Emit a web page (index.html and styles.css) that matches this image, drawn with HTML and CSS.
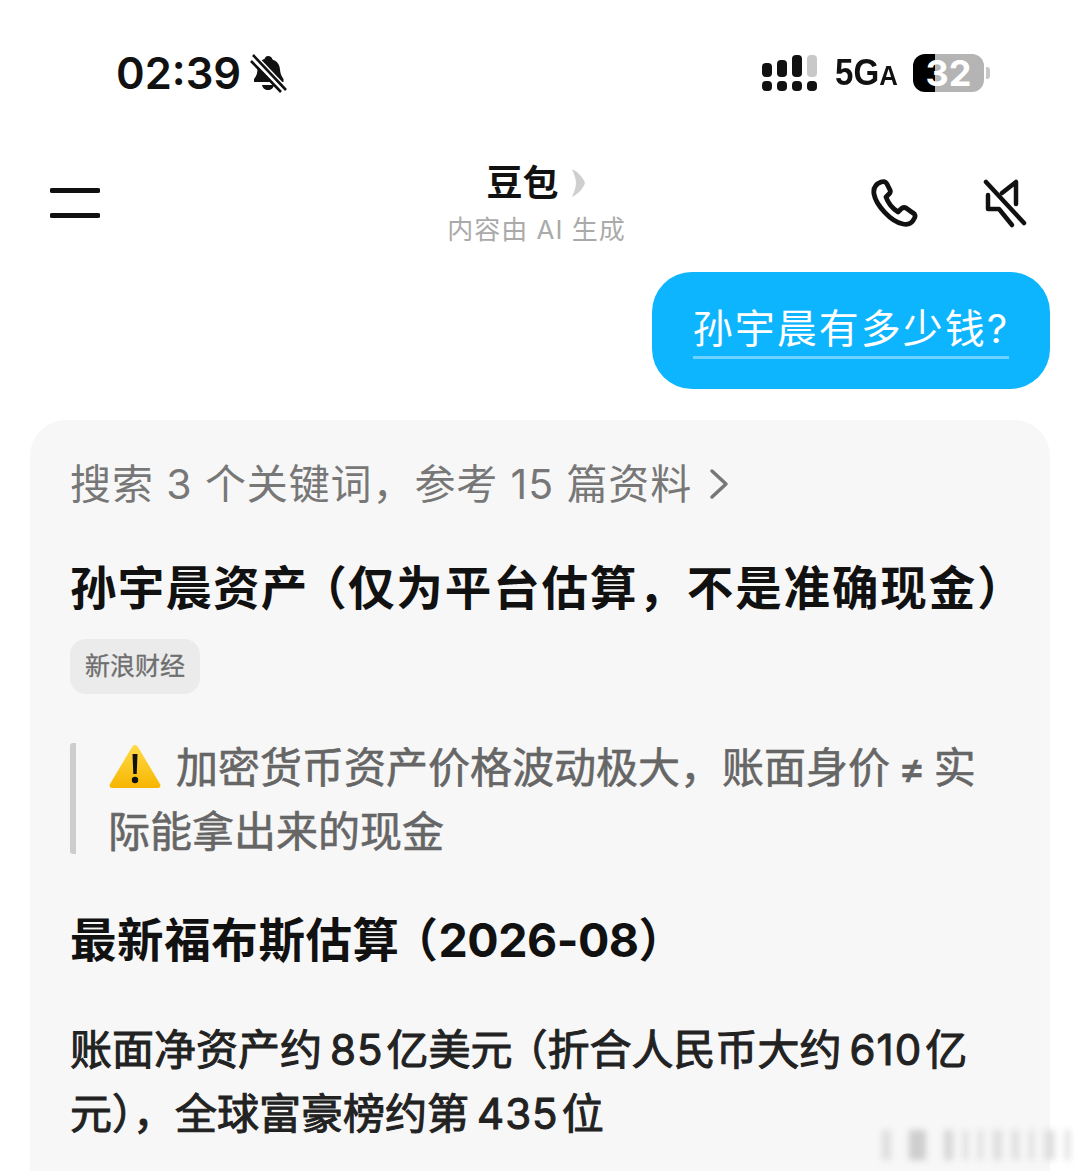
FILE: index.html
```html
<!DOCTYPE html>
<html lang="zh-CN">
<head>
  <meta charset="UTF-8">
  <meta name="viewport" content="width=device-width, initial-scale=1.0">
  <title>豆包</title>
  <link rel="stylesheet" href="styles.css">
</head>
<body>
  <div class="status-bar">
    <div class="status-left">
      <span class="time">02:39</span>
      <svg class="bell" width="38" height="40" viewBox="0 0 38 40">
        <path d="M18 3c2.400 0 4 1.500 4.500 3.500 4.500 1.500 7 5 7.500 10 .3 3.500 1 6 3.500 9.500v3H4v-3c2.500-3 3.500-6 3.500-10 0-5.500 3-9 7-10C15 4.500 16 3 18 3z" fill="#111"/>
        <path d="M12 32h12c-.5 3-3 5-6 5s-5.500-2-6-5z" fill="#111"/>
        <path d="M1 1l36 38" stroke="#fff" stroke-width="7"/>
        <path d="M3 2l33 35M1 8l30 31" stroke="#111" stroke-width="2.600" fill="none"/>
      </svg>
    </div>
    <div class="status-right">
      <div class="signal">
        <span class="bar b1"></span><span class="bar b2"></span><span class="bar b3"></span><span class="bar b4"></span>
        <span class="dot"></span><span class="dot"></span><span class="dot"></span><span class="dot"></span>
      </div>
      <span class="net">5G<small>A</small></span>
      <div class="battery">
        <div class="battery-body"><span>32</span></div>
        <span class="battery-cap"></span>
      </div>
    </div>
  </div>

  <header class="chat-header">
    <svg class="menu-icon" width="50" height="32" viewBox="0 0 50 32">
      <path d="M2 3.500h46M2 28.500h46" stroke="#111" stroke-width="5" stroke-linecap="round"/>
    </svg>
    <div class="chat-title">
      <div class="chat-name">
        <span>豆包</span>
        <svg width="16" height="30" viewBox="0 0 16 30">
          <path d="M1 1c6 3 11 8 13 14-2 6-7 11-13 14 2-5 4-10 4-14S3 6 1 1z" fill="#cfcfcf"/>
        </svg>
      </div>
      <div class="chat-note">内容由 AI 生成</div>
    </div>
    <div class="chat-actions">
      <svg width="50" height="50" viewBox="0 0 50 50" fill="none" stroke="#111" stroke-width="4.800" stroke-linejoin="round" stroke-linecap="round">
        <path d="M10 3c3-1 5 0 6 2l3 6c1 2 0 3-1 4l-3 3c2 6 6 11 12 15l3-3c1-1 3-2 5-1l7 5c2 1 3 3 1 6-2 4-6 6-11 5C20 43 5 26 3 15 2 9 5 5 10 3z"/>
      </svg>
      <svg width="46" height="50" viewBox="0 0 46 50" fill="none" stroke="#111" stroke-width="4.500" stroke-linejoin="round" stroke-linecap="round">
        <path d="M3 3l38 41"/>
        <path d="M19 14L33 3v22"/>
        <path d="M5 16v14h11l13 16"/>
      </svg>
    </div>
  </header>

  <main class="chat">
    <div class="bubble-row">
      <div class="bubble"><span>孙宇晨有多少钱?</span></div>
    </div>

    <section class="answer">
      <div class="search-line">
        <span>搜索 3 个关键词，参考 15 篇资料</span>
        <svg width="22" height="34" viewBox="0 0 22 34" fill="none" stroke="#777" stroke-width="3.500" stroke-linecap="round" stroke-linejoin="round">
          <path d="M4 4l14 13L4 30"/>
        </svg>
      </div>
      <h2 class="answer-title">孙宇晨资产<span class="paren">（</span><span class="title-rest">仅为平台估算，不是准确现金）</span></h2>
      <span class="source-tag">新浪财经</span>
      <blockquote class="warning">
        <div class="warning-text">
          <svg class="warning-icon" width="54" height="46" viewBox="0 0 54 46">
            <defs>
              <linearGradient id="warnFill" x1="0" y1="0" x2="0" y2="1">
                <stop offset="0" stop-color="#ffdc4a"/>
                <stop offset="1" stop-color="#f7b500"/>
              </linearGradient>
            </defs>
            <path d="M27 2c1 0 2 .5 3 2l22 37c1 2 0 4-2 4H4c-2 0-3-2-2-4L24 4c1-1.500 2-2 3-2z" fill="url(#warnFill)"/>
            <path d="M24.500 11h5l-.8 20h-3.400z" fill="#111"/>
            <circle cx="27" cy="37" r="3.200" fill="#111"/>
          </svg>加密货币资产价格波动极大，账面身价<span class="not-equal">≠</span>实<br>际能拿出来的现金
        </div>
      </blockquote>
      <h2 class="answer-heading">最新福布斯估算<span class="paren">（</span><span class="heading-num">2026-08）</span></h2>
      <p class="answer-text">账面净资产约<span class="num">85</span>亿美元<span class="paren paren-small">（</span>折合人民币大约<span class="num">610</span>亿<br>元），全球富豪榜约第<span class="num">435</span>位</p>
    </section>
  </main>

  <div class="watermark">
    <span class="w1"></span><span class="w2"></span><span class="w3"></span><span class="w4"></span><span class="w4"></span><span class="w1"></span><span class="w5"></span><span class="w4"></span><span class="w6"></span><span class="w4"></span>
  </div>
</body>
</html>
```

FILE: styles.css
```css
body {
  margin: 0;
  width: 1080px;
  height: 1171px;
  overflow: hidden;
  position: relative;
  background: #fff;
  color: #111;
  font-family: Inter, "Noto Sans CJK SC", sans-serif;
}

.status-bar {
  display: flex;
  justify-content: space-between;
  align-items: center;
  height: 146px;
  padding: 0 90px 0 116px;
  box-sizing: border-box;
}

.status-left {
  display: flex;
  align-items: center;
  gap: 9px;
}

.time {
  font-size: 43.500px;
  font-weight: 600;
}

.status-right {
  display: flex;
  align-items: center;
}

.signal {
  display: grid;
  grid-template-columns: repeat(4, 10px);
  column-gap: 5px;
  row-gap: 4px;
  align-items: end;
  width: 55px;
  margin-right: 18px;
}

.bar {
  background: #111;
  border-radius: 4px;
  width: 10px;
}

.b1 { height: 14px; }
.b2 { height: 17px; }
.b3 { height: 22px; }
.b4 { height: 22px; background: #c8c8c8; }

.dot {
  height: 10px;
  background: #111;
  border-radius: 4px;
}

.net {
  font-family: "Liberation Sans", sans-serif;
  font-size: 36px;
  font-weight: 700;
  width: 78px;
  transform: scaleX(0.92);
  transform-origin: left;
}

.net small {
  font-size: 28px;
}

.battery {
  display: flex;
  align-items: center;
  gap: 2px;
}

.battery-body {
  width: 71px;
  height: 38px;
  border-radius: 12px;
  background: linear-gradient(to right, #000 0 22px, #b4b4b4 22px);
  display: flex;
  justify-content: center;
  align-items: center;
  color: #fff;
  font-size: 36px;
  font-weight: 700;
}

.battery-cap {
  width: 4px;
  height: 12px;
  background: #c8c8c8;
  border-radius: 0 3px 3px 0;
}

.chat-header {
  display: grid;
  grid-template-columns: 1fr auto 1fr;
  align-items: center;
  height: 126px;
  padding: 0 51px 0 50px;
}

.menu-icon {
  margin-top: -12px;
}

.chat-title {
  text-align: center;
  margin: -12px 6px 0 0;
}

.chat-name {
  display: flex;
  justify-content: center;
  align-items: center;
  gap: 12px;
  font-size: 36px;
  font-weight: 700;
  line-height: 50px;
}

.chat-note {
  font-size: 26px;
  letter-spacing: 1px;
  line-height: 36px;
  color: #aaa;
  margin-top: 4px;
}

.chat-actions {
  display: flex;
  justify-content: flex-end;
  align-items: center;
  gap: 62px;
  margin-top: -10px;
}

.chat {
  padding: 0 30px;
}

.bubble-row {
  display: flex;
  justify-content: flex-end;
}

.bubble {
  width: 398px;
  height: 117px;
  box-sizing: border-box;
  padding-top: 30px;
  background: #0db5ff;
  border-radius: 40px;
  color: #fff;
  font-size: 40px;
  line-height: 54px;
  text-align: center;
}

.bubble span {
  display: inline-block;
  border-bottom: 3px solid #6dd2ff;
  letter-spacing: 2px;
}

.answer {
  margin-top: 31px;
  height: 800px;
  padding: 38px 40px 0;
  box-sizing: border-box;
  background: #f7f7f7;
  border-radius: 36px 36px 0 0;
}

.search-line {
  display: flex;
  align-items: center;
  gap: 16px;
  color: #777;
  font-size: 41px;
  letter-spacing: 0.900px;
  line-height: 52px;
}

.answer-title,
.answer-heading {
  margin: 0;
  font-size: 46.500px;
  font-weight: 700;
  line-height: 64px;
  white-space: nowrap;
}

.answer-title {
  margin-top: 46px;
  letter-spacing: 1.200px;
}

.title-rest {
  letter-spacing: 1.900px;
}

/* half-width opening bracket, the gap goes in front of it */
.paren {
  font-feature-settings: "halt";
  margin-left: 15px;
}

.source-tag {
  display: inline-block;
  margin-top: 19px;
  padding: 0 15px;
  background: #ebebeb;
  border-radius: 16px;
  color: #6f6f6f;
  font-size: 25px;
  line-height: 55px;
  -webkit-text-stroke: 0.3px #6f6f6f;
}

.warning {
  margin: 49px 0 0;
  padding-left: 32px;
  border-left: 6px solid #cdcdcd;
  border-radius: 3px;
  color: #666;
  font-size: 42px;
  line-height: 64px;
  height: 111px;
  -webkit-text-stroke: 0.6px #666;
}

.warning-text {
  transform: translateY(-7px);
}

.warning-icon {
  vertical-align: -6px;
  margin-right: 14px;
}

.not-equal {
  margin: 0 8px;
}

.answer-heading {
  margin-top: 54px;
  letter-spacing: 0.600px;
}

.heading-num {
  letter-spacing: -0.500px;
}

.answer-text {
  margin: 46px 0 0;
  font-size: 42px;
  line-height: 64px;
  color: #222;
  white-space: nowrap;
  -webkit-text-stroke: 1px #222;
}

.num {
  margin: 0 3px 0 8px;
  letter-spacing: 1px;
}

.paren-small {
  margin-left: 14px;
}

.watermark {
  position: absolute;
  right: 10px;
  bottom: 11px;
  display: flex;
  gap: 10px;
  height: 30px;
  filter: blur(3px);
}

.watermark span {
  background: #dedede;
}

.watermark .w1 { width: 9px; }
.watermark .w2 { width: 17px; background: #cecece; margin: 0 8px; }
.watermark .w3 { width: 9px; background: #d6d6d6; }
.watermark .w4 { width: 5px; }
.watermark .w5 { width: 7px; }
.watermark .w6 { width: 11px; }
```
